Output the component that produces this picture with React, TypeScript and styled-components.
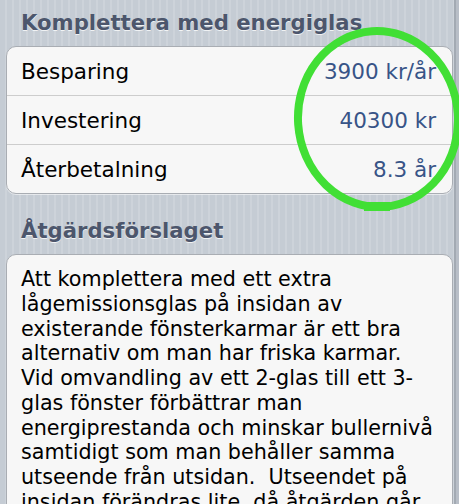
import { createGlobalStyle, styled } from "styled-components";

const GlobalStyle = createGlobalStyle`
  html, body {
    margin: 0;
    padding: 0;
  }
  body {
    width: 459px;
    height: 504px;
    overflow: hidden;
    background: repeating-linear-gradient(90deg, #c5ccd4 0 5px, #cdd3da 5px 7px);
    font-family: "DejaVu Sans", "Liberation Sans", sans-serif;
  }
`;

const Screen = styled.div`
  position: relative;
  height: 504px;
  padding: 11px 6px 0 6px;
  box-sizing: border-box;
  overflow: hidden;
`;

const SectionTitle = styled.h2<{ $gap?: number }>`
  margin: ${(p) => p.$gap ?? 0}px 0 11px 15px;
  font-size: 21.2px;
  font-weight: bold;
  line-height: 24px;
  color: #4c566c;
  text-shadow: 0 1px 0 rgba(255, 255, 255, 0.75);
  white-space: nowrap;
`;

const Card = styled.div`
  background: #f7f7f7;
  border: 1px solid #a9adb3;
  border-radius: 10px;
  box-shadow: 0 1px 0 rgba(255, 255, 255, 0.55);
  overflow: hidden;
`;

const Row = styled.div`
  height: 48px;
  display: flex;
  align-items: center;
  justify-content: space-between;
  padding: 2px 16px 0 14px;
  box-sizing: border-box;
  font-size: 21.5px;
  line-height: 24px;

  & + & {
    height: 49px;
    border-top: 1px solid #cdcdcd;
  }
`;

const Label = styled.span`
  color: #000;
`;

const Value = styled.span`
  color: #385487;
`;

const Body = styled.p`
  margin: 0;
  padding: 12px 15px 0 14px;
  font-size: 20.7px;
  line-height: 24.75px;
  color: #000;
  white-space: pre-wrap;
`;

const EdgeStrip = styled.div`
  position: absolute;
  top: 0;
  right: 0;
  bottom: 0;
  width: 5px;
  background: linear-gradient(90deg, #a3aab3 0 2px, #b8bec7 2px);
`;

const Marker = styled.svg`
  position: absolute;
  left: 288px;
  top: 22px;
  pointer-events: none;
`;

const rows = [
  { label: "Besparing", value: "3900 kr/år" },
  { label: "Investering", value: "40300 kr" },
  { label: "Återbetalning", value: "8.3 år" },
];

const description =
  "Att komplettera med ett extra lågemissionsglas på insidan av existerande fönsterkarmar är ett bra alternativ om man har friska karmar. Vid omvandling av ett 2-glas till ett 3-glas fönster förbättrar man energiprestanda och minskar bullernivå samtidigt som man behåller samma utseende från utsidan.  Utseendet på insidan förändras lite, då åtgärden går ut på att montera en ny båge på insidan av den befintliga.";

export default function App() {
  return (
    <>
      <GlobalStyle />
      <Screen>
        <SectionTitle>Komplettera med energiglas</SectionTitle>
        <Card>
          {rows.map((r) => (
            <Row key={r.label}>
              <Label>{r.label}</Label>
              <Value>{r.value}</Value>
            </Row>
          ))}
        </Card>
        <SectionTitle $gap={25}>Åtgärdsförslaget</SectionTitle>
        <Card>
          <Body>{description}</Body>
        </Card>
        <EdgeStrip />
        <Marker width="180" height="200" viewBox="0 0 180 200">
          <g fill="none" stroke="#41df35" strokeWidth="8" style={{ filter: "blur(0.5px)" }}>
            <ellipse cx="90" cy="97" rx="80" ry="88" transform="rotate(-4 90 97)" />
          </g>
          <rect x="76" y="180" width="26" height="9" fill="#41df35" />
        </Marker>
      </Screen>
    </>
  );
}
